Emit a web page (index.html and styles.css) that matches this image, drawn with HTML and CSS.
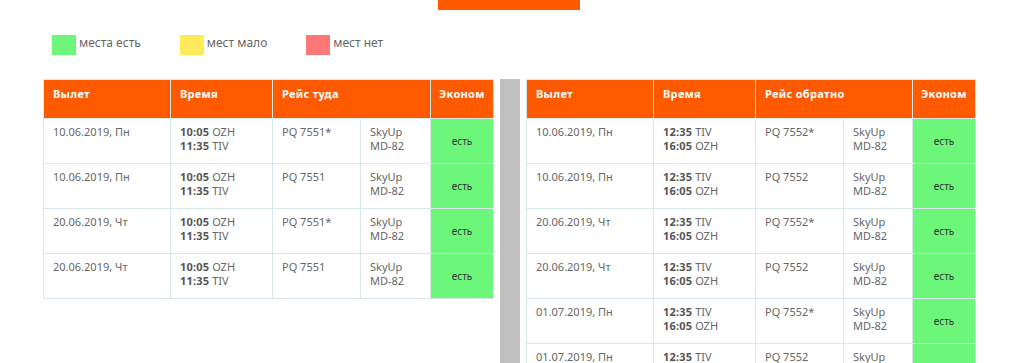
FILE: index.html
```html
<!DOCTYPE html>
<html lang="ru">
<head>
<meta charset="utf-8">
<title>Расписание</title>
<link rel="stylesheet" href="styles.css">
</head>
<body>
<div class="page">
  <div class="top-bar"></div>
  <ul class="legend">
    <li class="legend-item"><span class="swatch swatch-green"></span>места есть</li>
    <li class="legend-item"><span class="swatch swatch-yellow"></span>мест мало</li>
    <li class="legend-item"><span class="swatch swatch-red"></span>мест нет</li>
  </ul>
  <div class="tables">
    <table class="sched sched-left">
      <colgroup><col class="c-date"><col class="c-time"><col class="c-flight"><col class="c-plane"><col class="c-eco"></colgroup>
      <thead>
        <tr><th>Вылет</th><th>Время</th><th colspan="2">Рейс туда</th><th class="eco-h">Эконом</th></tr>
      </thead>
      <tbody>
        <tr><td>10.06.2019, Пн</td><td><b>10:05</b> OZH<br><b>11:35</b> TIV</td><td>PQ 7551*</td><td>SkyUp<br>MD-82</td><td class="eco">есть</td></tr>
        <tr><td>10.06.2019, Пн</td><td><b>10:05</b> OZH<br><b>11:35</b> TIV</td><td>PQ 7551</td><td>SkyUp<br>MD-82</td><td class="eco">есть</td></tr>
        <tr><td>20.06.2019, Чт</td><td><b>10:05</b> OZH<br><b>11:35</b> TIV</td><td>PQ 7551*</td><td>SkyUp<br>MD-82</td><td class="eco">есть</td></tr>
        <tr><td>20.06.2019, Чт</td><td><b>10:05</b> OZH<br><b>11:35</b> TIV</td><td>PQ 7551</td><td>SkyUp<br>MD-82</td><td class="eco">есть</td></tr>
      </tbody>
    </table>
    <div class="divider"></div>
    <table class="sched sched-right">
      <colgroup><col class="c-date"><col class="c-time-r"><col class="c-flight"><col class="c-plane-r"><col class="c-eco-r"></colgroup>
      <thead>
        <tr><th>Вылет</th><th>Время</th><th colspan="2">Рейс обратно</th><th class="eco-h">Эконом</th></tr>
      </thead>
      <tbody>
        <tr><td>10.06.2019, Пн</td><td><b>12:35</b> TIV<br><b>16:05</b> OZH</td><td>PQ 7552*</td><td>SkyUp<br>MD-82</td><td class="eco">есть</td></tr>
        <tr><td>10.06.2019, Пн</td><td><b>12:35</b> TIV<br><b>16:05</b> OZH</td><td>PQ 7552</td><td>SkyUp<br>MD-82</td><td class="eco">есть</td></tr>
        <tr><td>20.06.2019, Чт</td><td><b>12:35</b> TIV<br><b>16:05</b> OZH</td><td>PQ 7552*</td><td>SkyUp<br>MD-82</td><td class="eco">есть</td></tr>
        <tr><td>20.06.2019, Чт</td><td><b>12:35</b> TIV<br><b>16:05</b> OZH</td><td>PQ 7552</td><td>SkyUp<br>MD-82</td><td class="eco">есть</td></tr>
        <tr><td>01.07.2019, Пн</td><td><b>12:35</b> TIV<br><b>16:05</b> OZH</td><td>PQ 7552*</td><td>SkyUp<br>MD-82</td><td class="eco">есть</td></tr>
        <tr><td>01.07.2019, Пн</td><td><b>12:35</b> TIV<br><b>16:05</b> OZH</td><td>PQ 7552</td><td>SkyUp<br>MD-82</td><td class="eco">есть</td></tr>
      </tbody>
    </table>
  </div>
</div>
</body>
</html>
```

FILE: styles.css
```css
* { box-sizing: border-box; }
html, body { margin: 0; padding: 0; background: #fff; }
body {
  font-family: "Noto Sans", "DejaVu Sans", sans-serif;
  font-size: 11px;
  color: #666;
  overflow: hidden;
}
.page { width: 1028px; }
.top-bar {
  width: 142px;
  height: 10px;
  margin-left: 438px;
  background: #ff5a00;
}
.legend {
  list-style: none;
  margin: 25px 0 0 52px;
  padding: 0;
  display: flex;
  gap: 39px;
  height: 20px;
}
.legend-item {
  display: flex;
  align-items: flex-start;
  gap: 3px;
  font-size: 12px;
  line-height: 16px;
  color: #666;
}
.swatch { width: 24px; height: 20px; display: block; }
.swatch-green { background: #6cf77b; }
.swatch-yellow { background: #ffeb5a; }
.swatch-red { background: #ff7878; }

.tables {
  display: flex;
  align-items: stretch;
  margin: 24px 0 0 43px;
}
.divider {
  width: 20px;
  background: #c0c0c0;
  margin: 0 6px 0 6px;
  flex: none;
}
.sched {
  border-collapse: collapse;
  table-layout: fixed;
  flex: none;
  align-self: flex-start;
}
.sched-left { width: 450px; }
.sched-right { width: 449px; }
.c-date { width: 127px; }
.c-time { width: 102px; }
.c-time-r { width: 102px; }
.c-flight { width: 88px; }
.c-plane { width: 70px; }
.c-eco { width: 63px; }
.c-plane-r { width: 69px; }
.c-eco-r { width: 63px; }
.sched th, .sched td {
  border: 1px solid #d6e8e8;
  text-align: left;
  vertical-align: top;
}
.sched th {
  background: #ff5a00;
  color: #fff;
  font-weight: bold;
  font-size: 11px;
  line-height: 14px;
  height: 39px;
  padding: 7px 9px 0;
  letter-spacing: 0.3px;
}
.sched th.eco-h { padding-left: 8px; padding-right: 4px; }
.sched td {
  height: 45px;
  padding: 6px 9px 0;
  line-height: 14px;
  font-size: 11px;
  color: #666;
}
.sched td b { color: #555; font-weight: bold; letter-spacing: 0.2px; }
.sched td.eco {
  background: #6cf77b;
  color: #333;
  text-align: center;
  vertical-align: middle;
  padding: 0;
  font-size: 10px;
  border-color: #d6e8e8;
}
```
